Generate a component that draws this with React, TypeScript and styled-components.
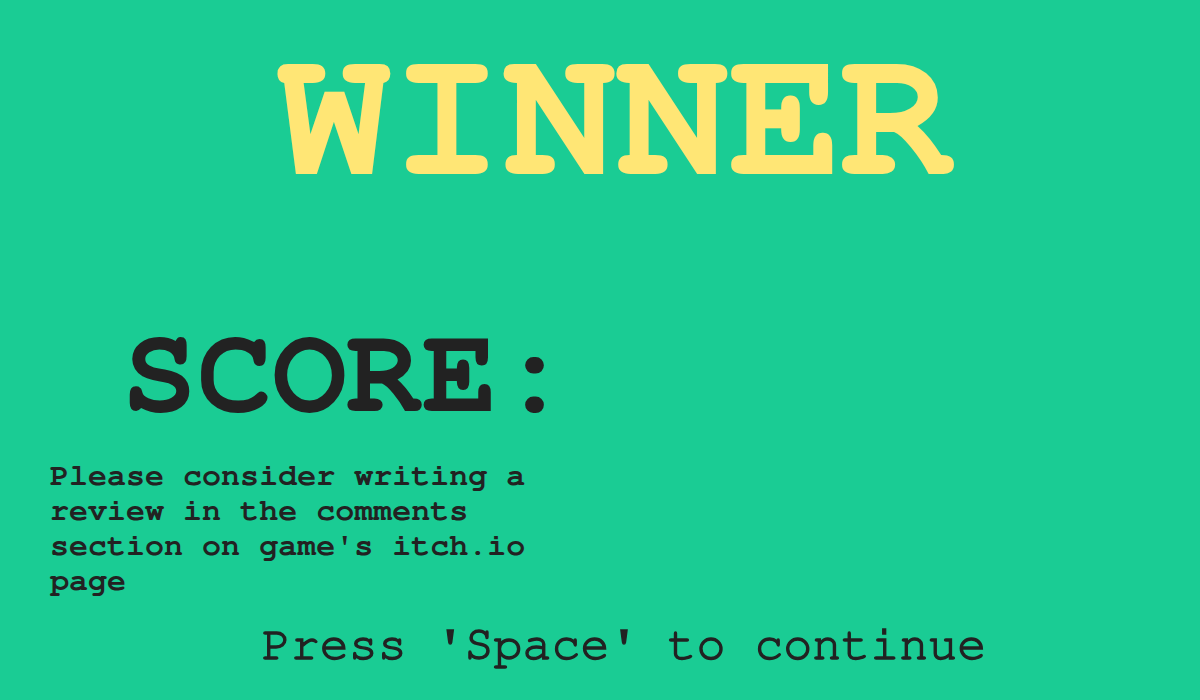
import React from "react";
import styled, { createGlobalStyle } from "styled-components";

const Global = createGlobalStyle`
  html, body { margin: 0; padding: 0; background: #1acc94; }
  * { box-sizing: border-box; }
`;

const Screen = styled.div`
  width: 1200px;
  height: 700px;
  background: #1acc94;
  display: flex;
  flex-direction: column;
  font-family: FreeMono, "Liberation Mono", "Courier New", monospace;
  color: #222222;
  overflow: hidden;
`;

const Title = styled.h1`
  margin: 0;
  padding: 24px 0 0 32px;
  font-size: 188px;
  line-height: 1;
  font-weight: 700;
  color: #ffe675;
  text-align: center;
`;

const Score = styled.div`
  margin-top: 99px;
  padding-left: 122px;
  font-size: 125px;
  line-height: 1;
  font-weight: 700;
`;

const Note = styled.p`
  margin: 22px 0 0 50px;
  width: 520px;
  font-size: 31.7px;
  line-height: 35px;
  font-weight: 700;
`;

const Prompt = styled.div`
  margin-top: 23px;
  padding-left: 48px;
  font-size: 48.3px;
  line-height: 1;
  font-weight: 400;
  -webkit-text-stroke: 1.4px #222222;
  text-align: center;
`;

export default function App() {
  return (
    <>
      <Global />
      <Screen>
        <Title>WINNER</Title>
        <Score>SCORE:</Score>
        <Note>Please consider writing a review in the comments section on game's itch.io page</Note>
        <Prompt>Press 'Space' to continue</Prompt>
      </Screen>
    </>
  );
}
